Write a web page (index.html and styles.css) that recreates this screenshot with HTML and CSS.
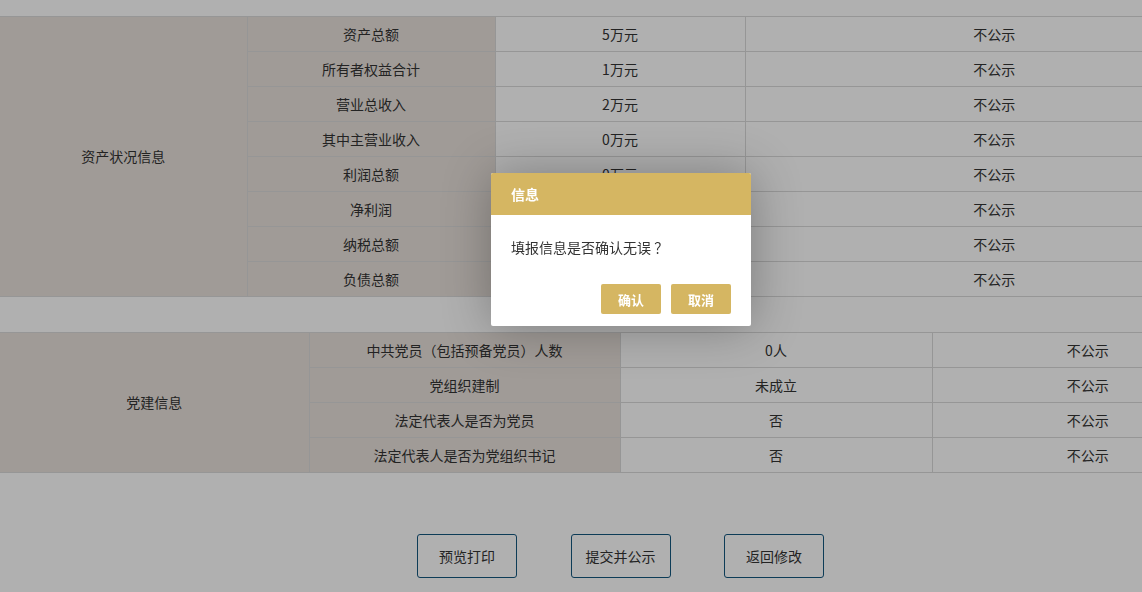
FILE: index.html
```html
<!DOCTYPE html>
<html lang="zh-CN">
<head>
    <meta charset="UTF-8">
    <title>年报信息确认</title>
    <link rel="stylesheet" href="styles.css">
</head>
<body>
    <div class="page">
        <table class="info-table asset-table">
            <colgroup>
                <col style="width: 247px">
                <col style="width: 248px">
                <col style="width: 250px">
                <col>
            </colgroup>
            <tr>
                <td class="label" rowspan="8">资产状况信息</td>
                <td class="label">资产总额</td>
                <td>5万元</td>
                <td>不公示</td>
            </tr>
            <tr><td class="label">所有者权益合计</td><td>1万元</td><td>不公示</td></tr>
            <tr><td class="label">营业总收入</td><td>2万元</td><td>不公示</td></tr>
            <tr><td class="label">其中主营业收入</td><td>0万元</td><td>不公示</td></tr>
            <tr><td class="label">利润总额</td><td>0万元</td><td>不公示</td></tr>
            <tr><td class="label">净利润</td><td>0万元</td><td>不公示</td></tr>
            <tr><td class="label">纳税总额</td><td>0万元</td><td>不公示</td></tr>
            <tr><td class="label">负债总额</td><td>0万元</td><td>不公示</td></tr>
        </table>

        <table class="info-table party-table">
            <colgroup>
                <col style="width: 309px">
                <col style="width: 311px">
                <col style="width: 312px">
                <col>
            </colgroup>
            <tr>
                <td class="label" rowspan="4">党建信息</td>
                <td class="label">中共党员（包括预备党员）人数</td>
                <td>0人</td>
                <td>不公示</td>
            </tr>
            <tr><td class="label">党组织建制</td><td>未成立</td><td>不公示</td></tr>
            <tr><td class="label">法定代表人是否为党员</td><td>否</td><td>不公示</td></tr>
            <tr><td class="label">法定代表人是否为党组织书记</td><td>否</td><td>不公示</td></tr>
        </table>

        <div class="actions">
            <button class="btn-outline">预览打印</button>
            <button class="btn-outline">提交并公示</button>
            <button class="btn-outline">返回修改</button>
        </div>
    </div>

    <div class="shade"></div>
    <div class="dialog">
        <div class="dialog-title">信息</div>
        <div class="dialog-content">填报信息是否确认无误 ？</div>
        <div class="dialog-btns">
            <button class="dialog-btn">确认</button>
            <button class="dialog-btn">取消</button>
        </div>
    </div>
</body>
</html>
```

FILE: styles.css
```css
html, body {
    margin: 0;
    padding: 0;
    overflow: hidden;
}

body {
    font-family: "Microsoft YaHei", "Noto Sans CJK SC", "Noto Sans", sans-serif;
    font-size: 14px;
    color: #333;
    background: #ffffff;
}

.page {
    width: 1244px;
    padding-top: 16px;
}

.info-table {
    width: 1244px;
    border-collapse: collapse;
    table-layout: fixed;
}

.info-table td {
    height: 33px;
    padding: 0 4px 1px;
    border: 1px solid #d9d9d9;
    text-align: center;
    line-height: 20px;
    background: #ffffff;
}

.info-table td.label {
    background: #e8e1db;
}

.info-table tr td:first-child {
    border-left: none;
}

.party-table {
    margin-top: 35px;
}

.actions {
    display: flex;
    justify-content: center;
    gap: 53.5px;
    padding-top: 61px;
    padding-right: 3px;
}

.btn-outline {
    width: 100px;
    height: 44px;
    font-family: inherit;
    font-size: 14px;
    color: #333;
    background: #ffffff;
    border: 1px solid #14577f;
    border-radius: 3px;
    cursor: pointer;
}

.shade {
    position: fixed;
    top: 0;
    left: 0;
    right: 0;
    bottom: 0;
    background: rgba(0, 0, 0, 0.31);
}

.dialog {
    position: absolute;
    top: 173px;
    left: 491px;
    width: 260px;
    background: #ffffff;
    border-radius: 2px;
    box-shadow: 1px 1px 50px rgba(0, 0, 0, 0.3);
}

.dialog-title {
    height: 42px;
    line-height: 42px;
    padding: 0 20px;
    background: #d5b662;
    color: #ffffff;
    font-size: 14px;
    font-weight: 600;
    border-radius: 2px 2px 0 0;
}

.dialog-content {
    padding: 20px;
    line-height: 24px;
    color: #333;
}

.dialog-btns {
    display: flex;
    justify-content: flex-end;
    gap: 10px;
    padding: 5px 20px 12px;
}

.dialog-btn {
    width: 60px;
    height: 30px;
    font-family: inherit;
    font-size: 13px;
    font-weight: bold;
    color: #ffffff;
    background: #d5b662;
    border: none;
    border-radius: 2px;
    cursor: pointer;
}
```
